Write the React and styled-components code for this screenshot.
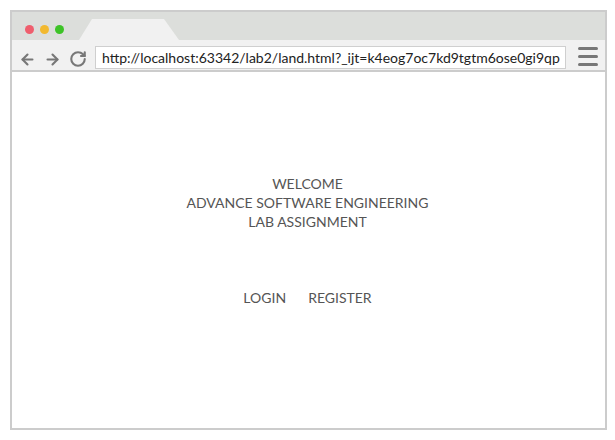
import React from 'react'
import styled, { createGlobalStyle } from 'styled-components'
import { ArrowLeft, ArrowRight, RotateCw } from 'lucide-react'

const GlobalStyle = createGlobalStyle`
  html, body {
    margin: 0;
    padding: 0;
    background: #ffffff;
    font-family: Lato, "Open Sans", sans-serif;
  }
`

const Page = styled.div`
  width: 615px;
  height: 440px;
  padding: 10px 0 0 10px;
  box-sizing: border-box;
  position: relative;
  overflow: hidden;
`

const Window = styled.div`
  width: 597px;
  height: 420px;
  border: 2px solid #cccccc;
  box-sizing: border-box;
  display: flex;
  flex-direction: column;
`

const TitleBar = styled.div`
  height: 28px;
  background: #dcdedb;
  display: flex;
  align-items: flex-end;
  flex-shrink: 0;
`

const Dots = styled.div`
  display: flex;
  gap: 6px;
  padding-left: 13px;
  margin-bottom: 6px;
`

const Dot = styled.span`
  width: 9px;
  height: 9px;
  border-radius: 50%;
  background: ${p => p.color};
`

const Tab = styled.div`
  width: 100px;
  height: 21px;
  margin-left: 15px;
  background: #f1f1f1;
  clip-path: polygon(13px 0, 85px 0, 100px 100%, 0 100%);
`

const Toolbar = styled.div`
  height: 32px;
  background: #f1f1f1;
  border-bottom: 2px solid #cccccc;
  display: flex;
  align-items: flex-start;
  padding: 6px 7px 0 7px;
  flex-shrink: 0;
  box-sizing: border-box;
`

const NavIcons = styled.div`
  display: flex;
  align-items: center;
  gap: 8px;
  color: #777777;
  margin-right: 8px;
  margin-top: 4px;
`

const UrlBox = styled.div`
  width: 472px;
  height: 23px;
  background: #ffffff;
  border: 1px solid #cfcfcf;
  box-sizing: border-box;
  font-size: 14px;
  line-height: 21px;
  color: #222222;
  padding-left: 6px;
  white-space: nowrap;
  overflow: hidden;
`

const Menu = styled.div`
  display: flex;
  flex-direction: column;
  gap: 5px;
  margin-left: 12px;
  margin-top: 1px;
`

const MenuLine = styled.span`
  width: 20px;
  height: 3px;
  border-radius: 2px;
  background: #777777;
`

const Content = styled.div`
  flex: 1;
  background: #ffffff;
  display: flex;
  flex-direction: column;
  align-items: center;
  padding-top: 102px;
  padding-right: 2px;
  color: #555555;
  font-size: 14px;
`

const Heading = styled.div`
  text-align: center;
  line-height: 19px;
`

const Links = styled.div`
  display: flex;
  gap: 22px;
  margin-top: 57px;
  line-height: 19px;
`

const NavLink = styled.a`
  color: #555555;
  text-decoration: none;
  cursor: pointer;
`

export default function App() {
  return (
    <Page>
      <GlobalStyle />
      <Window>
        <TitleBar>
          <Dots>
            <Dot color="#ef5e6d" />
            <Dot color="#f2b92f" />
            <Dot color="#3dc327" />
          </Dots>
          <Tab />
        </TitleBar>
        <Toolbar>
          <NavIcons>
            <ArrowLeft size={17} strokeWidth={3} />
            <ArrowRight size={17} strokeWidth={3} />
            <RotateCw size={18} strokeWidth={2.8} />
          </NavIcons>
          <UrlBox>http://localhost:63342/lab2/land.html?_ijt=k4eog7oc7kd9tgtm6ose0gi9qp</UrlBox>
          <Menu>
            <MenuLine />
            <MenuLine />
            <MenuLine />
          </Menu>
        </Toolbar>
        <Content>
          <Heading>
            WELCOME<br />
            ADVANCE SOFTWARE ENGINEERING<br />
            LAB ASSIGNMENT
          </Heading>
          <Links>
            <NavLink>LOGIN</NavLink>
            <NavLink>REGISTER</NavLink>
          </Links>
        </Content>
      </Window>
    </Page>
  )
}
